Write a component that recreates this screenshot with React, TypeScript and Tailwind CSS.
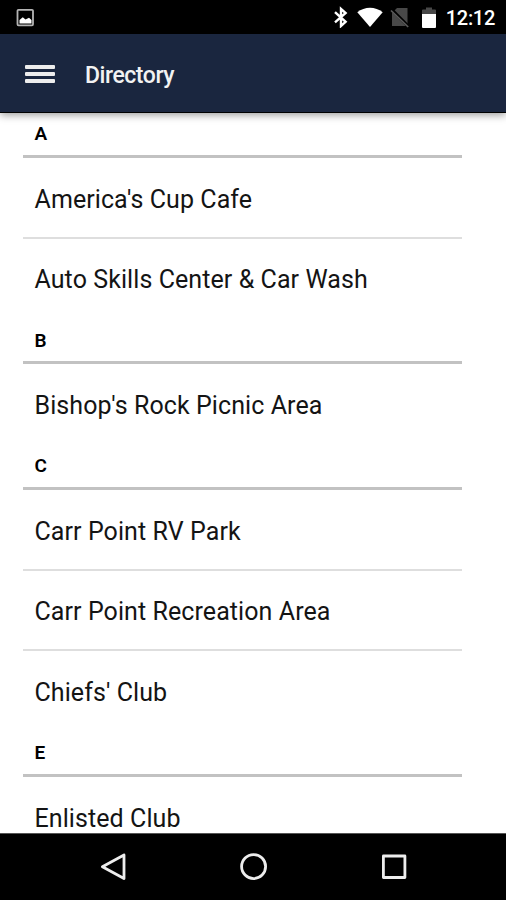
import React from 'react';

interface Section {
  letter: string;
  items: string[];
}

const sections: Section[] = [
  { letter: 'A', items: ["America's Cup Cafe", 'Auto Skills Center & Car Wash'] },
  { letter: 'B', items: ["Bishop's Rock Picnic Area"] },
  { letter: 'C', items: ['Carr Point RV Park', 'Carr Point Recreation Area', "Chiefs' Club"] },
  { letter: 'E', items: ['Enlisted Club'] },
];

const StatusBar: React.FC = () => (
  <div className="flex h-[34px] shrink-0 items-center justify-between bg-black pl-4 pr-[11px] text-white">
    <svg className="h-5 w-[19px]" viewBox="0 0 19 20" fill="none">
      <rect x="1.5" y="2.8" width="15.5" height="15.5" rx="1" stroke="#b4b4b4" strokeWidth="1.8" />
      <path d="M3.5 16.5V13L6.8 10.2L9.5 12.5L13 10.8L15.5 13V16.5Z" fill="#fff" />
    </svg>
    <div className="flex items-center">
      <svg className="h-[22px] w-[14px]" viewBox="0 0 14 22" fill="none" stroke="#fff" strokeWidth="2.4">
        <path d="M1 6.2L11.6 15.8L7 20V3L11.6 7L1 16.4" />
      </svg>
      <svg className="ml-[9px] h-[22px] w-[26px]" viewBox="0 0 26 22">
        <path d="M0.3 6.2C7.5 0.2 18.5 0.2 25.7 6.2L13 21Z" fill="#fff" />
      </svg>
      <svg className="ml-[7px] h-[22px] w-[20px]" viewBox="0 0 20 22">
        <path d="M7 2H17.5V20H2V7Z" fill="#484848" />
        <path d="M1 3L19 21" stroke="#000" strokeWidth="3.2" />
        <path d="M1 4.5L18.2 21" stroke="#5b5b5b" strokeWidth="1.7" />
      </svg>
      <svg className="ml-[11px] h-[22px] w-[16px]" viewBox="0 0 16 22">
        <path d="M1 8V4.5Q1 3.5 2 3.5H5V1.5H11V3.5H14Q15 3.5 15 4.5V8Z" fill="#484848" />
        <path d="M1 8H15V21Q15 22 14 22H2Q1 22 1 21Z" fill="#fff" />
      </svg>
      <span className="ml-[9px] pt-0.5 text-[20px] font-medium leading-none tracking-[-0.3px]">12:12</span>
    </div>
  </div>
);

const AppBar: React.FC = () => (
  <header className="relative z-10 flex h-[79px] shrink-0 items-center border-b border-black bg-[#1a263f] pl-[25px] text-white shadow-[0_2px_8px_rgba(0,0,0,0.4)]">
    <button type="button" aria-label="Menu" className="mt-px flex w-[30px] flex-col gap-[3px]">
      <span className="h-1 rounded-[1px] bg-[#ededed]" />
      <span className="h-1 rounded-[1px] bg-[#ededed]" />
      <span className="h-1 rounded-[1px] bg-[#ededed]" />
    </button>
    <h1 className="ml-[30px] pt-[4px] text-[23px] font-medium leading-none tracking-[-0.45px] text-[#f2f2f2]">Directory</h1>
  </header>
);

const NavBar: React.FC = () => (
  <nav className="flex h-[67px] shrink-0 items-center justify-center gap-[112px] border-t border-[#555] bg-black pl-px">
    <svg className="size-[28px]" viewBox="0 0 28 28" fill="none" stroke="#ededed" strokeWidth="2.8" strokeLinejoin="round">
      <path d="M24 2L2.4 13.8L24 25.6Z" />
    </svg>
    <svg className="size-[28px]" viewBox="0 0 28 28" fill="none" stroke="#ededed" strokeWidth="2.8">
      <circle cx="13.6" cy="13.6" r="12" />
    </svg>
    <svg className="size-[28px]" viewBox="0 0 28 28" fill="none" stroke="#ededed" strokeWidth="2.8" strokeLinejoin="round">
      <rect x="3.4" y="3" width="21.5" height="21.5" />
    </svg>
  </nav>
);

const App: React.FC = () => (
  <div className="flex h-[900px] w-[506px] flex-col overflow-hidden bg-white font-[Roboto,sans-serif]">
    <StatusBar />
    <AppBar />
    <main className="min-h-0 flex-1 overflow-hidden pl-[23px] pr-11">
      {sections.map((section) => (
        <section key={section.letter}>
          <h2 className="flex h-[45px] items-center border-b-[3px] border-[#c2c2c2] pl-[11.5px] pt-px text-[19px] font-semibold text-black">
            {section.letter}
          </h2>
          <ul>
            {section.items.map((item) => (
              <li
                key={item}
                className="flex h-[80.7px] items-center border-b-2 border-[#dedede] pl-[11.5px] pt-[4px] text-[25px] tracking-[0.08px] text-[#141414] last:border-transparent"
              >
                {item}
              </li>
            ))}
          </ul>
        </section>
      ))}
    </main>
    <NavBar />
  </div>
);

export default App;
